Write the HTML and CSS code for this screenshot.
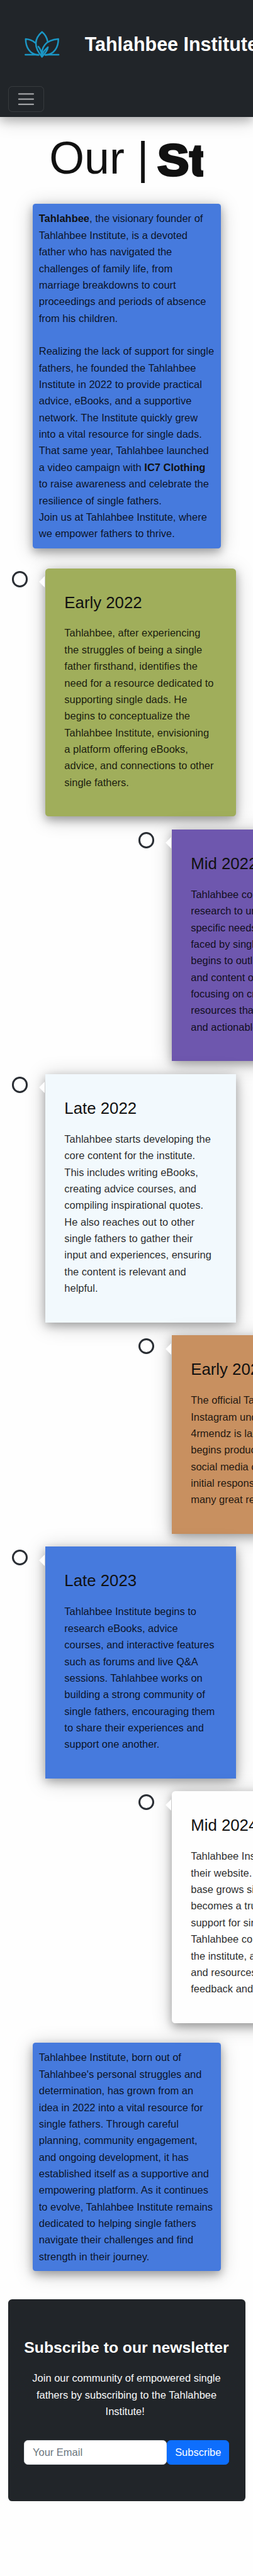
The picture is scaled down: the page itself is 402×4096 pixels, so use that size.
FILE: index.html
```html
<!DOCTYPE html>
<html lang="en">
<head>
<meta charset="utf-8">
<title>Tahlahbee Institute - Our Story</title>
<link rel="stylesheet" href="styles.css">
</head>
<body>
<div class="page">
  <header class="navbar">
    <div class="brand">
      <svg class="logo" viewBox="0 0 62 48" fill="none" stroke="#1b96c4" stroke-width="2.8" stroke-linecap="round" stroke-linejoin="round">
        <path d="M31 46C16 29 17 14 31 2c5 4 8.600 10 10 17"/>
        <path d="M31 46C29 30 37 16 60 14.500C60 29 53 42 37 43"/>
        <path d="M18.500 21C14 17 8 15 2 14.500C2 29 9 42 25 43"/>
        <path d="M1.500 42.500H24M38 42.500H60.500"/>
        <path d="M24.500 28C28 32 30.500 38 31 46C31.500 38 36 34 41.500 29C41 34 37 40 31 46"/>
      </svg>
      <span class="brand-name">Tahlahbee Institute</span>
    </div>
    <button class="toggler" aria-label="Menu">
      <svg viewBox="0 0 30 30" stroke="rgba(255,255,255,.58)" stroke-width="2.200" stroke-linecap="round"><path d="M4 7h22M4 15h22M4 23h22" transform="translate(-2.500 -2) scale(1.167 1.150)"/></svg>
    </button>
  </header>

  <h1 class="title"><span>Our |</span><span class="typed"><b>St</b></span></h1>

  <section class="story intro">
    <p><strong>Tahlahbee</strong>, the visionary founder of<br>Tahlahbee Institute, is a devoted<br>father who has navigated the<br>challenges of family life, from<br>marriage breakdowns to court<br>proceedings and periods of absence<br>from his children.<br><br>Realizing the lack of support for single<br>fathers, he founded the Tahlahbee<br>Institute in 2022 to provide practical<br>advice, eBooks, and a supportive<br>network. The Institute quickly grew<br>into a vital resource for single dads.<br>That same year, Tahlahbee launched<br>a video campaign with <strong>IC7 Clothing</strong><br>to raise awareness and celebrate the<br>resilience of single fathers.<br>Join us at Tahlahbee Institute, where<br>we empower fathers to thrive.</p>
  </section>

  <main class="timeline">
    <div class="entry">
      <i class="dot"></i><i class="arrow"></i>
      <article class="card green rounded">
        <h2>Early 2022</h2>
        <p>Tahlahbee, after experiencing<br>the struggles of being a single<br>father firsthand, identifies the<br>need for a resource dedicated to<br>supporting single dads. He<br>begins to conceptualize the<br>Tahlahbee Institute, envisioning<br>a platform offering eBooks,<br>advice, and connections to other<br>single fathers.</p>
      </article>
    </div>
    <div class="entry right">
      <i class="dot"></i><i class="arrow"></i>
      <article class="card purple">
        <h2>Mid 2022</h2>
        <p>Tahlahbee conducts<br>research to understand the<br>specific needs and challenges<br>faced by single fathers. He<br>begins to outline the structure<br>and content of the institute,<br>focusing on creating<br>resources that are practical<br>and actionable.</p>
      </article>
    </div>
    <div class="entry">
      <i class="dot"></i><i class="arrow"></i>
      <article class="card pale">
        <h2>Late 2022</h2>
        <p>Tahlahbee starts developing the<br>core content for the institute.<br>This includes writing eBooks,<br>creating advice courses, and<br>compiling inspirational quotes.<br>He also reaches out to other<br>single fathers to gather their<br>input and experiences, ensuring<br>the content is relevant and<br>helpful.</p>
      </article>
    </div>
    <div class="entry right">
      <i class="dot"></i><i class="arrow"></i>
      <article class="card orange">
        <h2>Early 2023</h2>
        <p>The official Tahlahbee<br>Instagram under the name<br>4rmendz is launched. He<br>begins producing<br>social media content. The<br>initial response is strong, with<br>many great reviews.</p>
      </article>
    </div>
    <div class="entry">
      <i class="dot"></i><i class="arrow"></i>
      <article class="card blue">
        <h2>Late 2023</h2>
        <p>Tahlahbee Institute begins to<br>research eBooks, advice<br>courses, and interactive features<br>such as forums and live Q&amp;A<br>sessions. Tahlahbee works on<br>building a strong community of<br>single fathers, encouraging them<br>to share their experiences and<br>support one another.</p>
      </article>
    </div>
    <div class="entry right">
      <i class="dot"></i><i class="arrow"></i>
      <article class="card white rounded">
        <h2>Mid 2024</h2>
        <p>Tahlahbee Institute launches<br>their website. The user<br>base grows significantly and<br>becomes a trusted source of<br>support for single fathers.<br>Tahlahbee continues to expand<br>the institute, adding tools<br>and resources based on<br>feedback and needs.</p>
      </article>
    </div>
  </main>

  <section class="story outro">
    <p>Tahlahbee Institute, born out of<br>Tahlahbee's personal struggles and<br>determination, has grown from an<br>idea in 2022 into a vital resource for<br>single fathers. Through careful<br>planning, community engagement,<br>and ongoing development, it has<br>established itself as a supportive and<br>empowering platform. As it continues<br>to evolve, Tahlahbee Institute remains<br>dedicated to helping single fathers<br>navigate their challenges and find<br>strength in their journey.</p>
  </section>

  <section class="newsletter">
    <h3>Subscribe to our newsletter</h3>
    <p>Join our community of empowered single<br>fathers by subscribing to the Tahlahbee<br>Institute!&nbsp;</p>
    <form class="signup">
      <input type="email" placeholder="Your Email">
      <button type="button">Subscribe</button>
    </form>
  </section>
</div>
</body>
</html>
```
FILE: styles.css
```css
* { box-sizing: border-box; }

body {
  margin: 0;
  background: #fefefe;
  font-family: "Liberation Sans", Arial, sans-serif;
  overflow: hidden;
}

/* Everything is laid out on a 449px wide canvas, then scaled down */
.page {
  zoom: 0.8955;
  width: 449px;
  height: 4574px;
  overflow: hidden;
  font-size: 18.4px;
  line-height: 29.44px;
  color: #111;
}

h1, h2, h3, p { margin: 0; font-weight: 400; }

.navbar {
  height: 208px;
  padding: 0 14px;
  background: #212529;
  box-shadow: 0 8px 16px rgba(0, 0, 0, .2), 0 6px 32px rgba(0, 0, 0, .19);
}

.brand {
  display: flex;
  align-items: center;
  height: 153px;
  padding: 4px 0 0 30px;
}

.logo { width: 62px; height: 48px; flex: none; }

.brand-name {
  margin-left: 44.500px;
  font-size: 34px;
  font-weight: 700;
  color: #fff;
  white-space: nowrap;
}

.toggler {
  display: flex;
  align-items: center;
  justify-content: center;
  width: 64px;
  height: 46px;
  padding: 0;
  border: 1px solid rgba(255, 255, 255, .1);
  border-radius: 7px;
  background: transparent;
}
.toggler svg { width: 30px; height: 30px; }

.title {
  display: flex;
  height: 154px;
  padding: 27px 0 0 87.500px;
  font-size: 80px;
  line-height: 92px;
  white-space: nowrap;
}
.typed { width: 87px; margin-left: 10px; padding: 3px 0 0 5px; overflow: hidden; }
.typed b {
  display: inline-block;
  font-size: 78px;
  letter-spacing: 1px;
  -webkit-text-stroke: 4px #111;
  transform: scaleX(1.08);
  transform-origin: 0 0;
}

.story, .card {
  background: #467add;
  box-shadow: 0 6px 16px rgba(0, 0, 0, .28), 0 5px 34px rgba(0, 0, 0, .22);
  white-space: nowrap;
}
.story p, .card p { color: rgba(0, 0, 0, .85); }
.story strong { color: #111; }

.story {
  width: 334px;
  margin-left: 58px;
  padding: 11.500px 11px;
  border-radius: 5px;
}
.intro { height: 612px; }
.outro { height: 405px; margin-top: 35px; }

.timeline {
  display: flex;
  flex-direction: column;
  gap: 23px;
  margin-top: 35px;
}

.entry { display: flex; align-items: flex-start; padding-left: 21px; }
.entry.right { padding-left: 245.300px; }

.dot {
  flex: none;
  width: 28.500px;
  height: 28.500px;
  margin-top: 5px;
  border: 4px solid #2a2e34;
  border-radius: 50%;
}

.arrow {
  z-index: 1;
  flex: none;
  margin: 14px 0 0 19.500px;
  border: 11px solid transparent;
  border-left-width: 0;
  border-right-color: #fefefe;
}

.card {
  flex: none;
  width: 339px;
  margin-left: 1px;
  padding: 38px 34px 46px 34.300px;
}
.rounded { border-radius: 6px; }
.card h2 {
  margin-bottom: 16.500px;
  font-size: 28.800px;
  line-height: 46px;
}
.green { background: #a0ae5b; }
.purple { background: #6e57ae; }
.pale { background: #f2f9fd; }
.orange { background: #c89060; }
.white { background: #fefefe; }

.newsletter {
  width: 421px;
  height: 357.500px;
  margin: 51px 0 0 14px;
  padding: 63px 28px 0;
  border-radius: 7px;
  background: #212529;
  color: #f8f9fa;
  text-align: center;
  white-space: nowrap;
}
.newsletter h3 {
  margin-bottom: 18px;
  font-size: 27.600px;
  line-height: 44px;
  font-weight: 700;
  color: #fff;
}

.signup { display: flex; margin-top: 36.500px; }
.signup input, .signup button {
  height: 43px;
  border-radius: 7px;
  font: inherit;
}
.signup input {
  width: 254px;
  padding: 0 15px;
  border: 1px solid #dee2e6;
  background: #fff;
}
.signup input::placeholder { color: #6c757d; }
.signup button {
  width: 111px;
  padding: 0;
  border: 1px solid #0d6efd;
  background: #0d6efd;
  color: #fff;
}
```
